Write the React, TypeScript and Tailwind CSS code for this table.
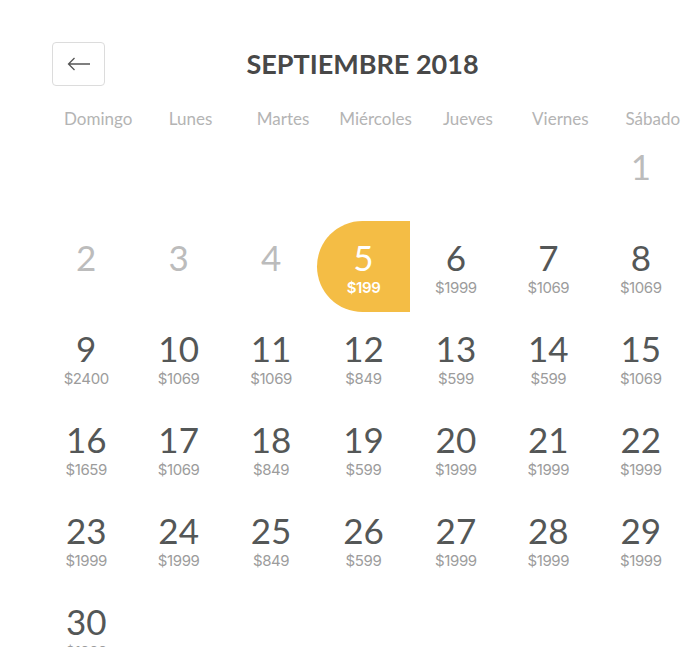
import React from "react";

type Day = { n: number; price?: string; muted?: boolean; active?: boolean };

const weekdays = ["Domingo", "Lunes", "Martes", "Miércoles", "Jueves", "Viernes", "Sábado"];

const prices: Record<number, string> = {
  5: "$199", 6: "$1999", 7: "$1069", 8: "$1069",
  9: "$2400", 10: "$1069", 11: "$1069", 12: "$849", 13: "$599", 14: "$599", 15: "$1069",
  16: "$1659", 17: "$1069", 18: "$849", 19: "$599", 20: "$1999", 21: "$1999", 22: "$1999",
  23: "$1999", 24: "$1999", 25: "$849", 26: "$599", 27: "$1999", 28: "$1999", 29: "$1999",
  30: "$1999",
};

const days: (Day | null)[] = [
  ...Array(6).fill(null),
  ...Array.from({ length: 30 }, (_, i) => {
    const n = i + 1;
    return { n, price: prices[n], muted: n < 5, active: n === 5 };
  }),
];

function Cell({ day }: { day: Day | null }) {
  if (!day) return <div className="h-[91px]" />;
  return (
    <div
      className={
        "h-[91px] flex flex-col items-center pt-[18px] " +
        (day.active ? "bg-[#f4bd45] rounded-l-[46px]" : "")
      }
    >
      <span
        className={
          "font-['Lato',sans-serif] text-[35px] leading-[36px] " +
          (day.active ? "text-white" : day.muted ? "text-[#bcbcbc]" : "text-[#545757]")
        }
      >
        {day.n}
      </span>
      {day.price && (
        <span
          className={
            "mt-[5px] font-['Inter',sans-serif] text-[15px] leading-[16px] tracking-[-0.4px] " +
            (day.active ? "text-white font-semibold" : "text-[#9c9c9c]")
          }
        >
          {day.price}
        </span>
      )}
    </div>
  );
}

export default function App() {
  return (
    <div className="w-[700px] h-[647px] overflow-hidden bg-white">
      <div className="w-[647px] ml-[40px] pt-[42px]">
        <div className="relative h-[44px] flex items-center justify-center">
          <button className="absolute left-[12px] top-0 w-[53px] h-[44px] rounded border border-[#dcdcdc] flex items-center justify-center">
            <svg width="24" height="14" viewBox="0 0 24 14" fill="none" stroke="#555" strokeWidth="1.3">
              <path d="M23 7H1.5M7.5 1L1.5 7l6 6" />
            </svg>
          </button>
          <h1 className="-ml-[2px] font-['Lato',sans-serif] font-bold text-[27px] text-[#484848]">
            SEPTIEMBRE 2018
          </h1>
        </div>
        <div className="grid grid-cols-7 mt-[20px] h-[24px] ml-[12px] -mr-[12px] items-center">
          {weekdays.map((w) => (
            <div key={w} className="text-center font-['Lato',sans-serif] text-[17px] text-[#b4b4b4]">
              {w}
            </div>
          ))}
        </div>
        <div className="grid grid-cols-7">
          {days.map((d, i) => (
            <Cell key={i} day={d} />
          ))}
        </div>
      </div>
    </div>
  );
}
